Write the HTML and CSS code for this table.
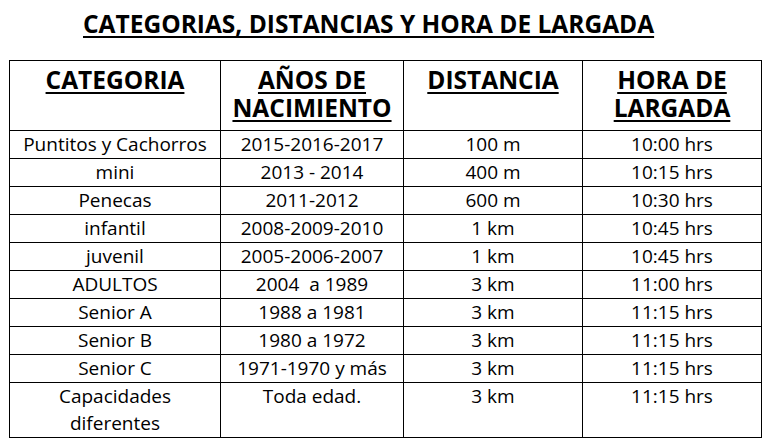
FILE: index.html
```html
<!DOCTYPE html>
<html lang="es">
<head>
<meta charset="utf-8">
<title>Categorias, distancias y hora de largada</title>
<link rel="stylesheet" href="styles.css">
</head>
<body>
<div class="page">
  <h1 class="title">CATEGORIAS, DISTANCIAS Y HORA DE LARGADA</h1>
  <table class="grid">
    <colgroup>
      <col class="c1"><col class="c2"><col class="c3"><col class="c4">
    </colgroup>
    <thead>
      <tr>
        <th><span class="u">CATEGORIA</span></th>
        <th><span class="u">AÑOS DE NACIMIENTO</span></th>
        <th><span class="u">DISTANCIA</span></th>
        <th><span class="u">HORA DE LARGADA</span></th>
      </tr>
    </thead>
    <tbody>
      <tr><td>Puntitos y Cachorros</td><td>2015-2016-2017</td><td>100 m</td><td>10:00 hrs</td></tr>
      <tr><td>mini</td><td>2013 - 2014</td><td>400 m</td><td>10:15 hrs</td></tr>
      <tr><td>Penecas</td><td>2011-2012</td><td>600 m</td><td>10:30 hrs</td></tr>
      <tr><td>infantil</td><td>2008-2009-2010</td><td>1 km</td><td>10:45 hrs</td></tr>
      <tr><td>juvenil</td><td>2005-2006-2007</td><td>1 km</td><td>10:45 hrs</td></tr>
      <tr><td>ADULTOS</td><td>2004&nbsp; a 1989</td><td>3 km</td><td>11:00 hrs</td></tr>
      <tr><td>Senior A</td><td>1988 a 1981</td><td>3 km</td><td>11:15 hrs</td></tr>
      <tr><td>Senior B</td><td>1980 a 1972</td><td>3 km</td><td>11:15 hrs</td></tr>
      <tr><td>Senior C</td><td>1971-1970 y más</td><td>3 km</td><td>11:15 hrs</td></tr>
      <tr class="last"><td>Capacidades<br>diferentes</td><td>Toda edad.</td><td>3 km</td><td>11:15 hrs</td></tr>
    </tbody>
  </table>
</div>
</body>
</html>
```

FILE: styles.css
```css
html, body {
  margin: 0;
  padding: 0;
  background: #ffffff;
}

.page {
  width: 770px;
  height: 447px;
  padding: 9px 0 0 9px;
  box-sizing: border-box;
  font-family: "Open Sans", Lato, "Liberation Sans", sans-serif;
  color: #000000;
}

.title {
  margin: 0;
  padding-left: 74px;
  font-size: 24.5px;
  line-height: 30px;
  font-weight: bold;
  text-decoration: underline;
  text-decoration-thickness: 2px;
  text-underline-offset: 3px;
  white-space: nowrap;
}

.grid {
  margin-top: 21px;
  width: 752px;
  border-collapse: collapse;
  table-layout: fixed;
}

.c1 { width: 211px; }
.c2 { width: 183px; }
.c3 { width: 179px; }
.c4 { width: 179px; }

.grid th,
.grid td {
  border: 1px solid #000000;
  text-align: center;
  vertical-align: top;
  padding: 0;
}

.grid th {
  height: 70px;
  box-sizing: border-box;
  padding: 5px 4px 0;
  font-size: 24.5px;
  line-height: 28px;
  font-weight: bold;
}

.u {
  text-decoration: underline;
  text-decoration-thickness: 2px;
  text-underline-offset: 3px;
}

.grid td {
  height: 27px;
  font-size: 19px;
  line-height: 27px;
}

.grid tr.last td {
  height: 54px;
}
```
